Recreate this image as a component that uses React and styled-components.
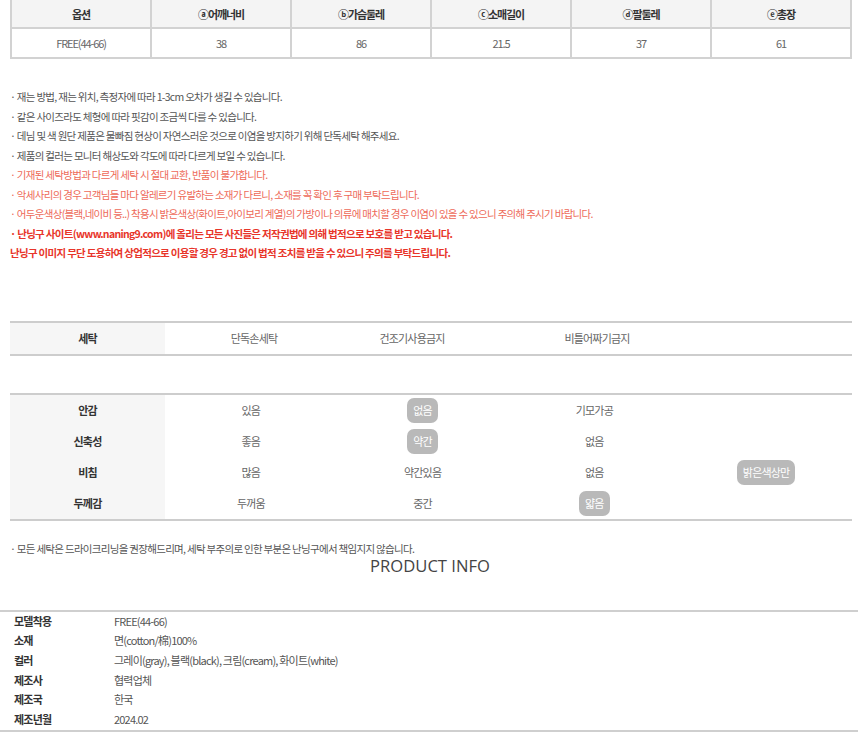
import React from 'react'
import styled, { createGlobalStyle } from 'styled-components'

const Global = createGlobalStyle`
  body {
    margin: 0;
    background: #fff;
    font-family: "Noto Sans CJK KR", "Noto Sans", sans-serif;
    font-size: 11px;
    letter-spacing: -0.8px;
    color: #555;
  }
`

const Page = styled.div`
  width: 860px;
  display: flex;
  flex-direction: column;
`

const SizeTable = styled.table`
  margin: 0 8px 0 10px;
  width: 842px;
  border-collapse: collapse;
  table-layout: fixed;
  letter-spacing: -1.1px;
`

const Th = styled.th`
  height: 27px;
  padding: 0;
  background: #f4f4f4;
  border: 2px solid #d2d2d2;
  border-top: none;
  font-weight: 700;
  color: #333;
  text-align: center;
`

const Td = styled.td`
  height: 28px;
  padding: 0;
  border: 2px solid #d2d2d2;
  color: #666;
  text-align: center;
`

const Notes = styled.ul`
  list-style: none;
  margin: 28px 0 0 10px;
  padding: 0;
  font-size: 10.5px;
  letter-spacing: -0.7px;
`

const Note = styled.li`
  line-height: 19.5px;
  color: ${p => (p.$tone === 'red' ? '#ee6a59' : p.$tone === 'strong' ? '#e8352a' : '#555')};
  font-weight: ${p => (p.$tone === 'strong' ? 700 : 400)};
  white-space: nowrap;
`

const Grid = styled.div`
  margin: ${p => p.$mt} 8px 0 10px;
  display: grid;
  grid-template-columns: ${p => p.$cols};
  border-top: 2px solid #cdcdcd;
  border-bottom: 2px solid #cdcdcd;
`

const Label = styled.div`
  height: ${p => p.$h || '31px'};
  display: flex;
  align-items: center;
  justify-content: center;
  background: #f6f6f6;
  font-weight: 700;
  color: #333;
`

const Cell = styled.div`
  height: ${p => p.$h || '31px'};
  display: flex;
  align-items: center;
  justify-content: center;
  color: #666;
`

const Pill = styled.span`
  display: inline-flex;
  align-items: center;
  justify-content: center;
  height: 25px;
  padding: 0 6px;
  border-radius: 7px;
  background: #b9b9b9;
  color: #fff;
`

const Footnote = styled.p`
  margin: 18px 0 0 10px;
  line-height: 19px;
  font-size: 10.5px;
  letter-spacing: -0.7px;
  color: #555;
`

const Title = styled.h2`
  margin: -2px 0 0;
  text-align: center;
  font-family: "Open Sans", "Noto Sans", sans-serif;
  font-size: 16.6px;
  font-weight: 400;
  letter-spacing: 0;
  line-height: 20px;
  color: #444;
`

const InfoTable = styled.div`
  margin: 34px 2px 0 0;
  border-top: 2px solid #cfcfcf;
  border-bottom: 2px solid #cfcfcf;
  display: grid;
  grid-template-columns: 114px 1fr;
`

const InfoKey = styled.div`
  padding-left: 14px;
  line-height: 19.7px;
  font-weight: 700;
  color: #333;
`

const InfoVal = styled.div`
  line-height: 19.7px;
  color: #555;
`

const sizeHead = ['옵션', 'ⓐ어깨너비', 'ⓑ가슴둘레', 'ⓒ소매길이', 'ⓓ팔둘레', 'ⓔ총장']
const sizeRow = ['FREE(44-66)', '38', '86', '21.5', '37', '61']

const notes = [
  ['', '· 재는 방법, 재는 위치, 측정자에 따라 1-3cm 오차가 생길 수 있습니다.'],
  ['', '· 같은 사이즈라도 체형에 따라 핏감이 조금씩 다를 수 있습니다.'],
  ['', '· 데님 및 색 원단 제품은 물빠짐 현상이 자연스러운 것으로 이염을 방지하기 위해 단독세탁 해주세요.'],
  ['', '· 제품의 컬러는 모니터 해상도와 각도에 따라 다르게 보일 수 있습니다.'],
  ['red', '· 기재된 세탁방법과 다르게 세탁 시 절대 교환, 반품이 불가합니다.'],
  ['red', '· 악세사리의 경우 고객님들 마다 알레르기 유발하는 소재가 다르니, 소재를 꼭 확인 후 구매 부탁드립니다.'],
  ['red', '· 어두운색상(블랙,네이비 등..) 착용시 밝은색상(화이트,아이보리 계열)의 가방이나 의류에 매치할 경우 이염이 있을 수 있으니 주의해 주시기 바랍니다.'],
  ['strong', '· 난닝구 사이트(www.naning9.com)에 올리는 모든 사진들은 저작권법에 의해 법적으로 보호를 받고 있습니다.'],
  ['strong', '난닝구 이미지 무단 도용하여 상업적으로 이용할 경우 경고 없이 법적 조치를 받을 수 있으니 주의를 부탁드립니다.'],
]

const attrs = [
  ['안감', ['있음', '*없음', '기모가공', '']],
  ['신축성', ['좋음', '*약간', '없음', '']],
  ['비침', ['많음', '약간있음', '없음', '*밝은색상만']],
  ['두께감', ['두꺼움', '중간', '*얇음', '']],
]

const info = [
  ['모델착용', 'FREE(44-66)'],
  ['소재', '면(cotton/棉)100%'],
  ['컬러', '그레이(gray), 블랙(black), 크림(cream), 화이트(white)'],
  ['제조사', '협력업체'],
  ['제조국', '한국'],
  ['제조년월', '2024.02'],
]

export default function App() {
  return (
    <Page>
      <Global />
      <SizeTable>
        <thead>
          <tr>{sizeHead.map(h => <Th key={h}>{h}</Th>)}</tr>
        </thead>
        <tbody>
          <tr>{sizeRow.map((v, i) => <Td key={i}>{v}</Td>)}</tr>
        </tbody>
      </SizeTable>

      <Notes>
        {notes.map(([tone, text], i) => (
          <Note key={i} $tone={tone}>{text}</Note>
        ))}
      </Notes>

      <Grid $mt="58px" $cols="155px 178px 138px 232px 1fr">
        <Label>세탁</Label>
        <Cell>단독손세탁</Cell>
        <Cell>건조기사용금지</Cell>
        <Cell>비틀어짜기금지</Cell>
        <Cell />
      </Grid>

      <Grid $mt="37px" $cols="155px repeat(4, 1fr)">
        {attrs.map(([k, vals]) => (
          <React.Fragment key={k}>
            <Label>{k}</Label>
            {vals.map((v, i) => (
              <Cell key={i}>{v.startsWith('*') ? <Pill>{v.slice(1)}</Pill> : v}</Cell>
            ))}
          </React.Fragment>
        ))}
      </Grid>

      <Footnote>· 모든 세탁은 드라이크리닝을 권장해드리며, 세탁 부주의로 인한 부분은 난닝구에서 책임지지 않습니다.</Footnote>
      <Title>PRODUCT INFO</Title>

      <InfoTable>
        {info.map(([k, v]) => (
          <React.Fragment key={k}>
            <InfoKey>{k}</InfoKey>
            <InfoVal>{v}</InfoVal>
          </React.Fragment>
        ))}
      </InfoTable>
    </Page>
  )
}
